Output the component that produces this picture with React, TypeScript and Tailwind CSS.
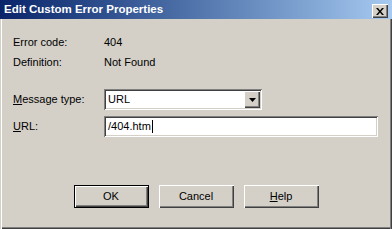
import React from 'react';

const font = { fontFamily: '"Liberation Sans", Arial, sans-serif' };

// classic raised bevel
const raised =
  'bg-[#d4d0c8] shadow-[inset_1px_1px_0_#ffffff,inset_-1px_-1px_0_#404040,inset_-2px_-2px_0_#808080]';
// classic sunken field
const sunken =
  'bg-white shadow-[inset_1px_1px_0_#808080,inset_-1px_-1px_0_#ffffff,inset_2px_2px_0_#404040,inset_-2px_-2px_0_#d4d0c8]';

const Button: React.FC<{ children: React.ReactNode; isDefault?: boolean }> = ({ children, isDefault }) => (
  <div
    className={
      isDefault
        ? 'w-[75px] h-[23px] border border-black'
        : 'w-[75px] h-[23px]'
    }
  >
    <div className={`w-full h-full flex items-center justify-center text-[11px] text-black ${raised}`}>
      {children}
    </div>
  </div>
);

export default function App() {
  return (
    <div
      className="w-[392px] h-[229px] bg-[#d4d0c8] flex flex-col overflow-hidden shadow-[inset_1px_0_0_#d4d0c8,inset_2px_0_0_#ffffff,inset_-1px_0_0_#404040,inset_-2px_0_0_#808080,inset_0_-1px_0_#404040,inset_0_-2px_0_#808080]"
      style={font}
    >
      {/* title bar */}
      <div className="h-[19px] flex items-center justify-between pl-[4px] pr-[4px] bg-gradient-to-r from-[#0a246a] to-[#a6caf0]">
        <span className="text-white font-bold text-[11.5px] leading-none pt-[1px]">Edit Custom Error Properties</span>
        <div className={`w-[16px] h-[14px] mt-[3px] flex items-center justify-center ${raised}`}>
          <svg width="8" height="7" viewBox="0 0 8 7">
            <path d="M0 0h2l2 2.5L6 0h2L5 3.5 8 7H6L4 4.5 2 7H0l3-3.5z" fill="#000" />
          </svg>
        </div>
      </div>

      {/* body */}
      <div className="flex flex-col pl-[13px] pt-[13px] text-[11px] text-black">
        <div className="h-[20px] flex items-center">
          <span className="w-[91px]">Error code:</span>
          <span>404</span>
        </div>
        <div className="h-[20px] flex items-center">
          <span className="w-[91px]">Definition:</span>
          <span>Not Found</span>
        </div>

        <div className="h-[21px] mt-[17px] flex items-center">
          <span className="w-[91px]">
            <span className="underline">M</span>essage type:
          </span>
          <div className={`w-[158px] h-[21px] flex items-center justify-between pl-[4px] pr-[2px] ${sunken}`}>
            <span>URL</span>
            <div className={`w-[16px] h-[17px] flex items-center justify-center ${raised}`}>
              <svg width="7" height="4" viewBox="0 0 7 4">
                <path d="M0 0h7L3.5 4z" fill="#000" />
              </svg>
            </div>
          </div>
        </div>

        <div className="h-[21px] mt-[6px] flex items-center">
          <span className="w-[91px]">
            <span className="underline">U</span>RL:
          </span>
          <div className={`w-[274px] h-[21px] flex items-center pl-[4px] ${sunken}`}>
            <span>/404.htm</span>
            <span className="w-[1px] h-[13px] bg-black ml-[1px]" />
          </div>
        </div>
      </div>

      {/* buttons */}
      <div className="flex justify-center gap-[10px] mt-[48px]">
        <Button isDefault>OK</Button>
        <Button>Cancel</Button>
        <Button>
          <span>
            <span className="underline">H</span>elp
          </span>
        </Button>
      </div>
    </div>
  );
}
